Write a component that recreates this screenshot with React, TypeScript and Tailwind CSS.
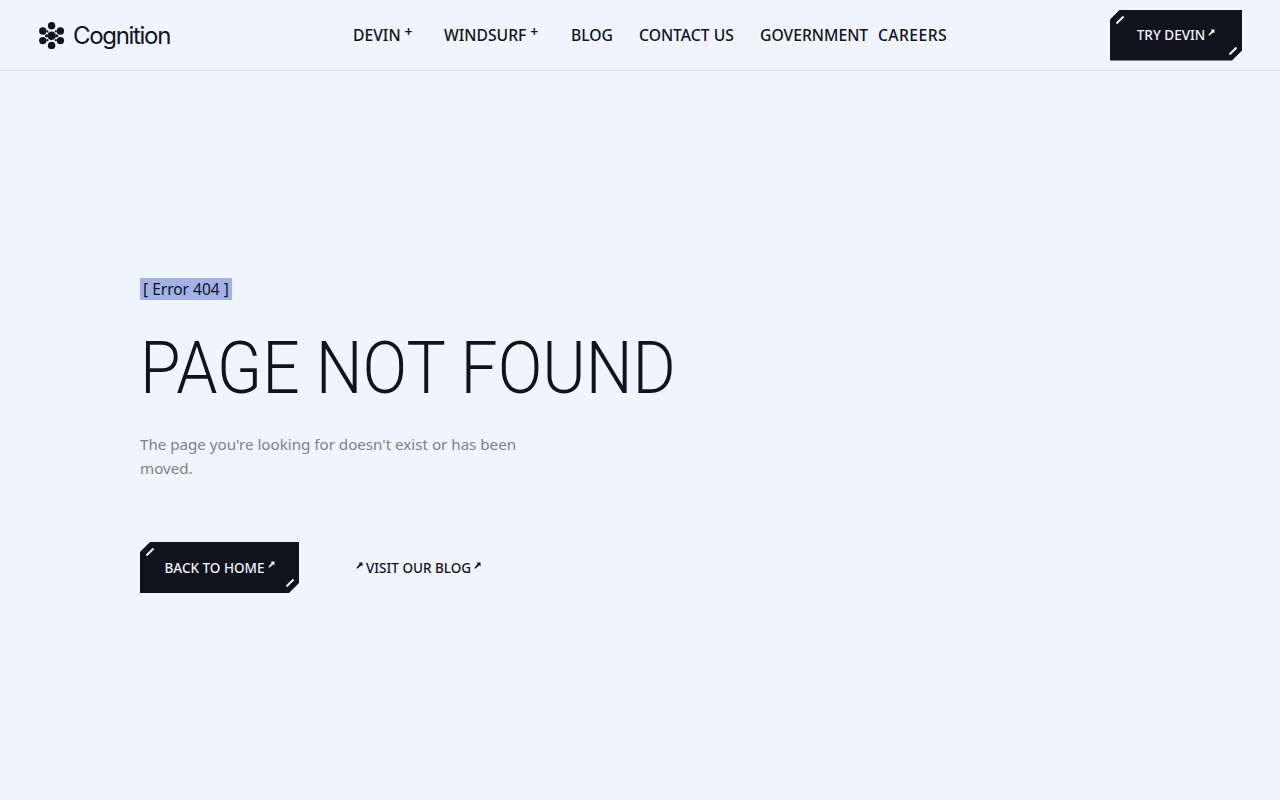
const navItems = [
  { label: "DEVIN", plus: true, width: "w-[91px]" },
  { label: "WINDSURF", plus: true, width: "w-[127px]" },
  { label: "BLOG", plus: false, width: "w-[68px]" },
  { label: "CONTACT US", plus: false, width: "w-[121px]" },
  { label: "GOVERNMENT", plus: false, width: "w-[118px]" },
  { label: "CAREERS", plus: false, width: "w-[70px] tracking-[0.4px]" },
];

function Logo() {
  const dots = [
    [12.6, 3.8, 3.7], [3.8, 9, 3.7], [21.4, 9, 3.7], [3.8, 18.6, 3.7], [21.4, 18.6, 3.7], [12.6, 23.4, 3.7],
    [12.6, 13.8, 4.3], [7.4, 13.8, 1.5], [17.8, 13.8, 1.5], [8.4, 9.4, 1.1], [16.8, 9.4, 1.1], [8.4, 18.2, 1.1], [16.8, 18.2, 1.1],
  ];
  return (
    <svg width="26" height="27" viewBox="0 0 26 27" className="fill-[#10131c]">
      {dots.map(([cx, cy, r], i) => (
        <circle key={i} cx={cx} cy={cy} r={r} />
      ))}
    </svg>
  );
}

function Arrow({ className }: { className?: string }) {
  return (
    <svg width="7" height="7" viewBox="0 0 7 7" fill="currentColor" className={className}>
      <path d="M2.4 0.5 H6.5 V4.6 L5.4 3.3 L1.2 6.7 L0.4 5.9 L3.8 1.6 Z" />
    </svg>
  );
}

function CutButton({ label, width }: { label: string; width: string }) {
  return (
    <a className={`relative flex h-[51px] ${width} items-center justify-center gap-[3px] bg-[#10131c] pt-px text-[13.5px] font-medium text-[#f0f4fc] [clip-path:polygon(10px_0,100%_0,100%_calc(100%-10px),calc(100%-10px)_100%,0_100%,0_10px)]`}>
      <span className="absolute left-[5px] top-[9px] h-[2px] w-[10px] -rotate-45 bg-[#f0f4fc]" />
      <span className="absolute bottom-[9px] right-[4px] h-[2px] w-[10px] -rotate-45 bg-[#f0f4fc]" />
      {label}
      <Arrow className="mb-[7px]" />
    </a>
  );
}

export default function App() {
  return (
    <div className="min-h-[800px] bg-[#f0f4fc] font-['Noto_Sans','Liberation_Sans',sans-serif] text-[#10131c]">
      <header className="flex h-[71px] items-center border-b border-[#d3d7e0] pl-[39px] pr-[38px]">
        <div className="flex w-[131px] items-center gap-2">
          <Logo />
          <span className="font-['Inter',sans-serif] pt-[2px] text-[24px] tracking-[-0.055em]">Cognition</span>
        </div>
        <nav className="ml-[183px] flex items-center pt-[2px] text-[15.7px] font-medium">
          {navItems.map((item) => (
            <a key={item.label} className={`flex ${item.width} items-start gap-1 whitespace-nowrap`}>
              {item.label}
              {item.plus && <span className="text-sm font-semibold leading-[16px]">+</span>}
            </a>
          ))}
        </nav>
        <div className="ml-auto">
          <CutButton label="TRY DEVIN" width="w-[132px]" />
        </div>
      </header>
      <main className="pl-[140px] pt-[206px]">
        <span className="inline-block h-[22px] bg-[#a3b1e8] px-[3px] text-[15.5px] leading-[22px]">[ Error 404 ]</span>
        <h1 className="mt-[25px] origin-left scale-x-[0.916] font-['Roboto',sans-serif] text-[72px] font-light leading-[86px] whitespace-nowrap">PAGE NOT FOUND</h1>
        <p className="mt-[20px] w-[400px] text-[15.15px] leading-[24px] text-[#7d818d]">
          The page you're looking for doesn't exist or has been moved.
        </p>
        <div className="mt-[62px] flex items-center">
          <CutButton label="BACK TO HOME" width="w-[159px]" />
          <a className="ml-[57px] flex items-center gap-[3px] pt-[2px] text-[13.5px] font-medium">
            <Arrow className="mb-[7px]" />
            VISIT OUR BLOG
            <Arrow className="mb-[7px]" />
          </a>
        </div>
      </main>
    </div>
  );
}
